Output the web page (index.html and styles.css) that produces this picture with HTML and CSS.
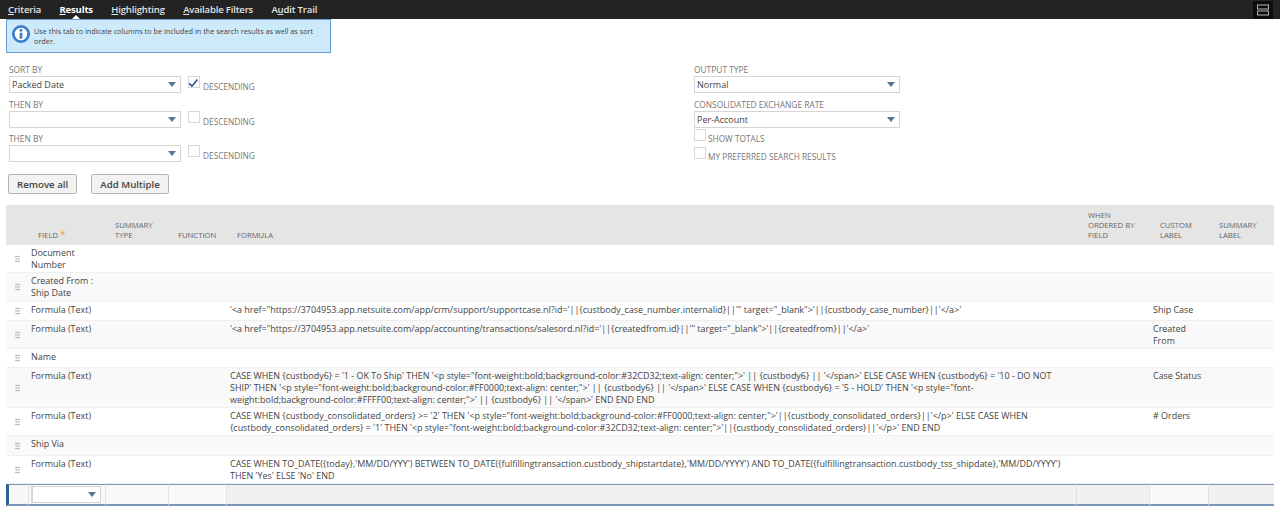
FILE: index.html
```html
<!DOCTYPE html>
<html lang="en">
<head>
<meta charset="utf-8">
<title>Results</title>
<link rel="stylesheet" href="styles.css">
</head>
<body>
<nav class="tabs">
  <a class="tab"><u>C</u>riteria</a>
  <a class="tab active"><u>R</u>esults</a>
  <a class="tab"><u>H</u>ighlighting</a>
  <a class="tab"><u>A</u>vailable Filters</a>
  <a class="tab">A<u>u</u>dit Trail</a>
  <span class="layout-btn"><svg width="12" height="12" viewBox="0 0 12 12"><rect x="0.5" y="1" width="11" height="4" fill="none" stroke="#b5b5b5"/><rect x="0.5" y="7" width="11" height="4" fill="none" stroke="#b5b5b5"/></svg></span>
</nav>
<div class="notice">
  <svg class="notice-icon" width="18" height="18" viewBox="0 0 20 20"><circle cx="10" cy="10" r="8.5" fill="#fff" stroke="#3b7fc9" stroke-width="3"/><circle cx="10" cy="6" r="1.6" fill="#3b7fc9"/><rect x="8.5" y="8.6" width="3" height="6.6" fill="#3b7fc9"/></svg>
  <p>Use this tab to indicate columns to be included in the search results as well as sort order.</p>
</div>
<section class="options">
  <div class="col-left">
    <div class="field"><label>SORT BY</label><div class="line"><div class="select wide">Packed Date<i class="arrow"></i></div><span class="check on"><svg width="14" height="12" viewBox="0 0 14 12"><path d="M1.5 6.5 L5 10 L12 1.5" fill="none" stroke="#24508f" stroke-width="2"/></svg></span><span class="lbl">DESCENDING</span></div></div>
    <div class="field"><label>THEN BY</label><div class="line"><div class="select wide"><i class="arrow"></i></div><span class="check"></span><span class="lbl">DESCENDING</span></div></div>
    <div class="field"><label>THEN BY</label><div class="line"><div class="select wide"><i class="arrow"></i></div><span class="check"></span><span class="lbl">DESCENDING</span></div></div>
  </div>
  <div class="col-right">
    <div class="field"><label>OUTPUT TYPE</label><div class="select wider">Normal<i class="arrow"></i></div></div>
    <div class="field"><label>CONSOLIDATED EXCHANGE RATE</label><div class="select wider">Per-Account<i class="arrow"></i></div></div>
    <div class="line tight"><span class="check"></span><span class="lbl">SHOW TOTALS</span></div>
    <div class="line tight"><span class="check"></span><span class="lbl">MY PREFERRED SEARCH RESULTS</span></div>
  </div>
</section>
<div class="buttons">
  <button class="btn">Remove all</button>
  <button class="btn">Add Multiple</button>
</div>
<table class="grid">
  <colgroup><col class="c0"><col class="c1"><col class="c2"><col class="c3"><col class="c4"><col class="c5"><col class="c6"><col class="c7"></colgroup>
  <thead>
    <tr><th></th><th class="field-h">FIELD <span class="star">*</span></th><th class="tight-h">SUMMARY<br>TYPE</th><th class="tight-h">FUNCTION</th><th>FORMULA</th><th class="wide-h">WHEN<br>ORDERED BY<br>FIELD</th><th>CUSTOM<br>LABEL</th><th>SUMMARY<br>LABEL</th></tr>
  </thead>
  <tbody>
    <tr class="h28"><td class="drag"><i class="dots"></i></td><td>Document Number</td><td></td><td></td><td></td><td></td><td></td><td></td></tr>
    <tr class="h29 alt"><td class="drag"><i class="dots"></i></td><td>Created From : Ship Date</td><td></td><td></td><td></td><td></td><td></td><td></td></tr>
    <tr class="h19"><td class="drag"><i class="dots"></i></td><td>Formula (Text)</td><td></td><td></td><td>'&lt;a href="https://3704953.app.netsuite.com/app/crm/support/supportcase.nl?id='||{custbody_case_number.internalid}||'" target="_blank"&gt;'||{custbody_case_number}||'&lt;/a&gt;'</td><td></td><td>Ship Case</td><td></td></tr>
    <tr class="h28 alt"><td class="drag"><i class="dots"></i></td><td>Formula (Text)</td><td></td><td></td><td>'&lt;a href="https://3704953.app.netsuite.com/app/accounting/transactions/salesord.nl?id='||{createdfrom.id}||'" target="_blank"&gt;'||{createdfrom}||'&lt;/a&gt;'</td><td></td><td>Created From</td><td></td></tr>
    <tr class="h19"><td class="drag"><i class="dots"></i></td><td>Name</td><td></td><td></td><td></td><td></td><td></td><td></td></tr>
    <tr class="h40 alt"><td class="drag"><i class="dots"></i></td><td>Formula (Text)</td><td></td><td></td><td>CASE WHEN {custbody6} = '1 - OK To Ship' THEN '&lt;p style="font-weight:bold;background-color:#32CD32;text-align: center;"&gt;' || {custbody6} || '&lt;/span&gt;' ELSE CASE WHEN {custbody6} = '10 - DO NOT SHIP' THEN '&lt;p style="font-weight:bold;background-color:#FF0000;text-align: center;"&gt;' || {custbody6} || '&lt;/span&gt;' ELSE CASE WHEN {custbody6} = '5 - HOLD' THEN '&lt;p style="font-weight:bold;background-color:#FFFF00;text-align: center;"&gt;' || {custbody6} || '&lt;/span&gt;' END END END</td><td></td><td>Case Status</td><td></td></tr>
    <tr class="h28"><td class="drag"><i class="dots"></i></td><td>Formula (Text)</td><td></td><td></td><td>CASE WHEN {custbody_consolidated_orders} &gt;= '2' THEN '&lt;p style="font-weight:bold;background-color:#FF0000;text-align: center;"&gt;'||{custbody_consolidated_orders}||'&lt;/p&gt;' ELSE CASE WHEN {custbody_consolidated_orders} = '1' THEN '&lt;p style="font-weight:bold;background-color:#32CD32;text-align: center;"&gt;'||{custbody_consolidated_orders}||'&lt;/p&gt;' END END</td><td></td><td># Orders</td><td></td></tr>
    <tr class="h20 alt"><td class="drag"><i class="dots"></i></td><td>Ship Via</td><td></td><td></td><td></td><td></td><td></td><td></td></tr>
    <tr class="h28"><td class="drag"><i class="dots"></i></td><td>Formula (Text)</td><td></td><td></td><td>CASE WHEN TO_DATE({today},'MM/DD/YYY') BETWEEN TO_DATE({fulfillingtransaction.custbody_shipstartdate},'MM/DD/YYYY') AND TO_DATE({fulfillingtransaction.custbody_tss_shipdate},'MM/DD/YYYY') THEN 'Yes' ELSE 'No' END</td><td></td><td></td><td></td></tr>
    <tr class="edit"><td class="e-first"></td><td class="e-plain"><div class="select mini"><i class="arrow"></i></div></td><td class="e-plain"></td><td class="e-plain"></td><td class="e-hatch"></td><td class="e-hatch"></td><td class="e-plain"></td><td class="e-hatch"></td></tr>
  </tbody>
</table>
</body>
</html>
```

FILE: styles.css
```css
* { box-sizing: border-box; }
html, body { margin: 0; padding: 0; }
body { font-family: "Open Sans", sans-serif; font-size: 9px; color: #444; background: #fff; height: 506px; overflow: hidden; }

.tabs { display: flex; align-items: center; height: 19px; background: #232323; padding-left: 8px; gap: 18.3px; position: relative; }
.tab { color: #e4e4e4; font-size: 9.5px; letter-spacing: -0.15px; line-height: 19px; font-weight: 600; }
.tab.active { color: #fff; font-weight: 700; position: relative; }
.tab.active::after { content: ""; position: absolute; left: 50%; margin-left: -4px; bottom: 0; border: 4px solid transparent; border-top: 0; border-bottom-color: #fff; }
.layout-btn { margin-left: auto; margin-right: 7px; width: 20px; height: 18px; background: #0c0c0c; display: flex; align-items: center; justify-content: center; }

.notice { display: flex; align-items: flex-start; width: 325px; height: 34px; margin-left: 6px; background: #cdeafa; border: 1px solid #6a9ad8; padding: 2px 4px 0 5px; gap: 4px; }
.notice-icon { flex: none; margin-top: 3px; }
.notice p { margin: 0; font-size: 7.3px; line-height: 10px; padding-top: 4px; color: #444; }

.options { display: flex; padding: 11px 0 0 9px; height: 121px; }
.col-left { width: 685px; display: flex; flex-direction: column; }
.col-right { display: flex; flex-direction: column; }
.field label { display: block; font-size: 8.4px; line-height: 11px; color: #777; margin-bottom: 1px; }
.field { height: 34.5px; }
.line { display: flex; align-items: flex-start; }
.line.tight { height: 18px; }
.field + .line.tight { margin-top: -4px; }
.select { position: relative; height: 17px; border: 1px solid #d5d5d5; background: #fff; font-size: 9px; line-height: 15px; padding-left: 2px; color: #444; }
.select.wide { width: 172px; }
.select.wider { width: 206px; }
.select.mini { width: 70px; height: 17px; border-left: 2px solid #d5d5d5; }
.arrow { position: absolute; right: 4px; top: 5px; width: 0; height: 0; border: 4.5px solid transparent; border-bottom: 0; border-top: 5px solid #5a7398; }
.check { display: flex; width: 12px; height: 12px; border: 1px solid #d8d8d8; background: #fff; margin-left: 7px; flex: none; }
.check.on svg { margin: 0 0 0 -1px; }
.col-right .check { margin-left: 0; }
.lbl { font-size: 8.3px; line-height: 11px; color: #777; margin: 5px 0 0 3px; }
.col-right .lbl { margin: 3.5px 0 0 2px; }

.buttons { display: flex; gap: 14px; padding-left: 8px; height: 31px; }
.btn { height: 20px; padding: 0 8px; background: #f2f2f2; border: 1px solid #b5b5b5; border-radius: 2px; font-family: "Open Sans", sans-serif; font-size: 9.7px; font-weight: 600; color: #444; }

.grid { table-layout: fixed; border-collapse: separate; border-spacing: 0; width: 1268px; margin-left: 6px; }
.c0 { width: 22px; } .c1 { width: 77px; } .c2 { width: 63px; } .c3 { width: 58px; }
.c4 { width: 850px; } .c5 { width: 73px; } .c6 { width: 59px; } .c7 { width: 66px; }
.grid th { background: #e5e5e5; height: 40px; vertical-align: bottom; text-align: left; font-weight: 400; font-size: 7.7px; line-height: 10px; color: #666; padding: 0 0 5px 11px; }
.grid th.field-h, .grid th.tight-h { padding-left: 10px; }
.grid th.wide-h { padding-left: 12px; }
.star { color: #f0a030; font-size: 10px; line-height: 8px; }
.grid td { vertical-align: top; font-size: 8.95px; line-height: 12px; padding: 2px 4px 0 3px; border-bottom: 1px solid #efefef; color: #444; }
.grid td:nth-child(5) { padding-right: 10px; padding-left: 4px; }
.grid td:nth-child(7) { padding-left: 4px; }
.alt td { background: #f9f9f9; }
.h19 { height: 19px; }
.h20 { height: 20px; }
.h28 { height: 28px; }
.h29 { height: 29px; }
.h40 { height: 40px; }
.grid .drag { text-align: center; vertical-align: middle; padding: 0; }
.dots { display: block; width: 5px; height: 8px; margin: 0 auto; background-image: radial-gradient(circle, #999 0.8px, transparent 0.9px); background-size: 2.5px 2.67px; }
.grid .edit td { height: 22px; padding: 1px 0 0 2px; border-top: 1px solid #7b96ba; border-bottom: 2px solid #7b96ba; vertical-align: top; border-left: 1px solid #e2e2e2; }
.grid .edit .e-first { border-left: 3px solid #2f5f93; background: #f7f7f7; padding: 0; }
.grid .e-plain { background: #f9f9f9; }
.grid .e-hatch { background-color: #f3f3f3; background-image: repeating-conic-gradient(#e9e9e9 0 25%, #f8f8f8 0 50%); background-size: 2px 2px; }
```
